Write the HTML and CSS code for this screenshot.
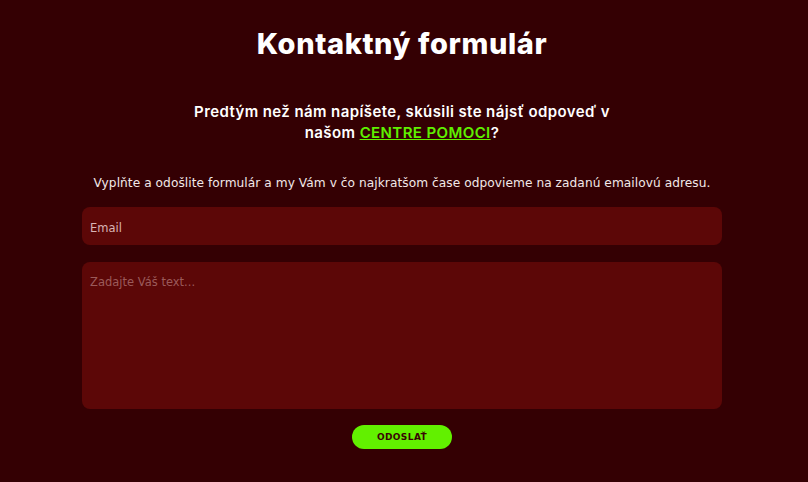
FILE: index.html
```html
<!DOCTYPE html>
<html lang="sk">
<head>
    <meta charset="UTF-8">
    <meta name="viewport" content="width=device-width, initial-scale=1.0">
    <title>Kontaktný formulár</title>
    <link rel="stylesheet" href="styles.css">
</head>
<body>
    <div class="contact">
        <h1>Kontaktný formulár</h1>
        <p class="lead">Predtým než nám napíšete, skúsili ste nájsť odpoveď v<br>
            našom <a href="#">CENTRE POMOCI</a>?</p>
        <p class="info">Vyplňte a odošlite formulár a my Vám v čo najkratšom čase odpovieme na zadanú emailovú adresu.</p>
        <form class="contact-form">
            <input type="email" class="field" placeholder="Email">
            <textarea class="field message" placeholder="Zadajte Váš text..."></textarea>
            <button type="submit">ODOSLAŤ</button>
        </form>
    </div>
</body>
</html>
```

FILE: styles.css
```css
body {
    margin: 0;
    background-color: #340003;
    font-family: "Open Sans", sans-serif;
    color: #fff;
}
.contact {
    width: 640px;
    margin: 0 auto;
    padding-top: 26px;
    padding-right: 4px;
    text-align: center;
}
h1 {
    margin: 0;
    font-family: Inter, sans-serif;
    font-weight: 800;
    font-size: 29px;
    line-height: 36px;
    letter-spacing: 0.6px;
}
.lead {
    margin: 39px 0 0;
    font-family: Inter, sans-serif;
    font-weight: 600;
    font-size: 15px;
    line-height: 21px;
    letter-spacing: 0.4px;
}
.lead a {
    color: #5ff000;
    text-decoration: underline;
}
.info {
    margin: 30px 0 0;
    font-family: "DejaVu Sans", sans-serif;
    font-size: 12.2px;
    line-height: 20px;
    letter-spacing: 0.05px;
    color: #f2e8e8;
}
.contact-form {
    margin-top: 14px;
    display: flex;
    flex-direction: column;
    align-items: center;
    gap: 17px;
}
.field {
    box-sizing: border-box;
    width: 100%;
    border: none;
    border-radius: 8px;
    background-color: #5c0707;
    padding: 13px 8px 9px;
    font-family: "DejaVu Sans", sans-serif;
    font-size: 11.5px;
    color: #fff;
    outline: none;
}
.field::placeholder {
    color: #d9b4b4;
}
input.field {
    height: 38px;
}
.message {
    height: 147px;
    padding-top: 13px;
    resize: none;
}
.message::placeholder {
    color: #9b5a5a;
}
button {
    margin-top: -1px;
    width: 100px;
    height: 24px;
    border: none;
    border-radius: 12px;
    background-color: #62f000;
    color: #3a0404;
    font-family: "DejaVu Sans", sans-serif;
    font-size: 9px;
    font-weight: bold;
    letter-spacing: 0.4px;
    cursor: pointer;
}
```
